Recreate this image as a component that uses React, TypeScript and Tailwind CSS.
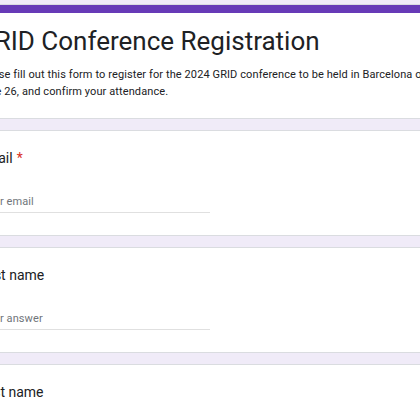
const questions = [
  { label: "Email", required: true, placeholder: "Your email" },
  { label: "First name", required: false, placeholder: "Your answer" },
  { label: "Last name", required: false, placeholder: "Your answer" },
];

function QuestionCard({
  label,
  required,
  placeholder,
}: {
  label: string;
  required: boolean;
  placeholder: string;
}) {
  return (
    <div className="h-[106px] shrink-0 rounded-lg border border-[#dadce0] bg-white px-6 pt-[15px]">
      <div className="pl-[1px] text-[14px] leading-6 text-[#202124]">
        {label}
        {required && <span className="ml-1 text-[#d93025]">*</span>}
      </div>
      <div className="mt-[18px] w-1/2">
        <input
          type="text"
          placeholder={placeholder}
          className="h-[21px] w-full border-b border-[#e0e0e0] bg-transparent pl-[4px] text-[11px] leading-5 tracking-[0.1px] text-[#202124] outline-none placeholder:text-[#70757a]"
        />
      </div>
    </div>
  );
}

export default function App() {
  return (
    <div
      className="h-[420px] w-[420px] overflow-hidden bg-[#f0ebf8]"
      style={{ fontFamily: "Roboto, 'Noto Sans', Arial, sans-serif" }}
    >
      <div className="-ml-[48px] flex w-[516px] flex-col gap-[11px] pt-1">
        {/* Header */}
        <div className="overflow-hidden rounded-lg border border-[#dadce0] bg-white">
          <div className="h-2 bg-[#673ab7]" />
          <div className="px-6 pt-[10px] pb-[18px]">
            <h1 className="text-[26px] leading-9 text-[#202124]">
              GRID Conference Registration
            </h1>
            <p className="mt-[7px] text-[11px] leading-[17px] tracking-[0.1px] text-[#202124]">
              Please fill out this form to register for the 2024 GRID conference to be held in Barcelona on June 26, and confirm your attendance.
            </p>
          </div>
        </div>

        {questions.map((q) => (
          <QuestionCard key={q.label} {...q} />
        ))}
      </div>
    </div>
  );
}
